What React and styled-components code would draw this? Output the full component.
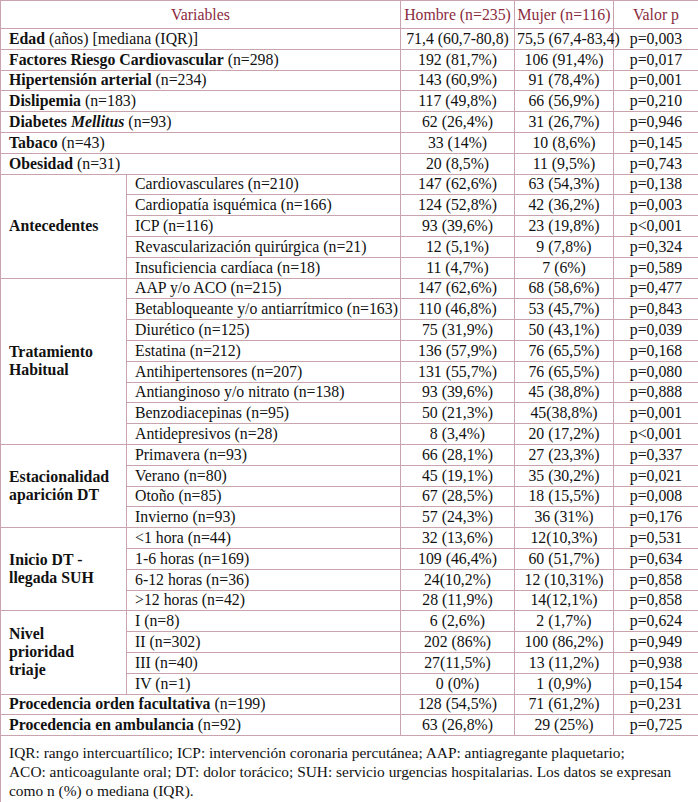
import React from 'react';
import styled, { createGlobalStyle } from 'styled-components';

const lineColor = '#c9a3ae';
const serif = '"Liberation Serif", "Times New Roman", serif';

const GlobalStyle = createGlobalStyle`
  body {
    margin: 0;
    background: #fff;
    font-family: ${ serif };
    color: #111;
  }
`;

const Table = styled.table`
  width: 698px;
  border-collapse: collapse;
  table-layout: fixed;
  font-family: ${ serif };
  font-size: 15.8px;
  line-height: 18px;
  color: #111;
`;

const HeadCell = styled.th`
  height: 27px;
  border: 1px solid ${ lineColor };
  color: #8a2b40;
  font-weight: 400;
  text-align: center;
  padding: 0 2px;
  white-space: nowrap;
`;

const Row = styled.tr`
  height: 20.8px;
`;

const Cell = styled.td`
  border: 1px solid ${ lineColor };
  padding: 0 8px;
  white-space: nowrap;
  text-align: ${ p => ( p.center ? 'center' : 'left' ) };
  ${ p => p.center && 'padding: 0 2px;' }
`;

const GroupCell = styled.td`
  border: 1px solid ${ lineColor };
  padding: 0 8px;
  font-weight: 700;
  line-height: 18px;
  vertical-align: middle;
`;

const NoteCell = styled.td`
  border: 1px solid ${ lineColor };
  padding: 7px 8px 8px;
  font-size: 15.4px;
  line-height: 19px;
  text-align: left;
  white-space: nowrap;
`;

const Strong = styled.b`
  font-weight: 700;
`;

const singles = [
  [ <><Strong>Edad</Strong> (años) [mediana (IQR)]</>, '71,4 (60,7-80,8)', '75,5 (67,4-83,4)', 'p=0,003' ],
  [ <><Strong>Factores Riesgo Cardiovascular</Strong> (n=298)</>, '192 (81,7%)', '106 (91,4%)', 'p=0,017' ],
  [ <><Strong>Hipertensión arterial</Strong> (n=234)</>, '143 (60,9%)', '91 (78,4%)', 'p=0,001' ],
  [ <><Strong>Dislipemia</Strong> (n=183)</>, '117 (49,8%)', '66 (56,9%)', 'p=0,210' ],
  [ <><Strong>Diabetes <i>Mellitus</i></Strong> (n=93)</>, '62 (26,4%)', '31 (26,7%)', 'p=0,946' ],
  [ <><Strong>Tabaco</Strong> (n=43)</>, '33 (14%)', '10 (8,6%)', 'p=0,145' ],
  [ <><Strong>Obesidad</Strong> (n=31)</>, '20 (8,5%)', '11 (9,5%)', 'p=0,743' ],
];

const groups = [
  {
    label: [ 'Antecedentes' ],
    rows: [
      [ 'Cardiovasculares (n=210)', '147 (62,6%)', '63 (54,3%)', 'p=0,138' ],
      [ 'Cardiopatía isquémica (n=166)', '124 (52,8%)', '42 (36,2%)', 'p=0,003' ],
      [ 'ICP (n=116)', '93 (39,6%)', '23 (19,8%)', 'p<0,001' ],
      [ 'Revascularización quirúrgica (n=21)', '12 (5,1%)', '9 (7,8%)', 'p=0,324' ],
      [ 'Insuficiencia cardíaca (n=18)', '11 (4,7%)', '7 (6%)', 'p=0,589' ],
    ],
  },
  {
    label: [ 'Tratamiento', 'Habitual' ],
    rows: [
      [ 'AAP y/o ACO (n=215)', '147 (62,6%)', '68 (58,6%)', 'p=0,477' ],
      [ 'Betabloqueante y/o antiarrítmico (n=163)', '110 (46,8%)', '53 (45,7%)', 'p=0,843' ],
      [ 'Diurético (n=125)', '75 (31,9%)', '50 (43,1%)', 'p=0,039' ],
      [ 'Estatina (n=212)', '136 (57,9%)', '76 (65,5%)', 'p=0,168' ],
      [ 'Antihipertensores (n=207)', '131 (55,7%)', '76 (65,5%)', 'p=0,080' ],
      [ 'Antianginoso y/o nitrato (n=138)', '93 (39,6%)', '45 (38,8%)', 'p=0,888' ],
      [ 'Benzodiacepinas (n=95)', '50 (21,3%)', '45(38,8%)', 'p=0,001' ],
      [ 'Antidepresivos (n=28)', '8 (3,4%)', '20 (17,2%)', 'p<0,001' ],
    ],
  },
  {
    label: [ 'Estacionalidad', 'aparición DT' ],
    rows: [
      [ 'Primavera (n=93)', '66 (28,1%)', '27 (23,3%)', 'p=0,337' ],
      [ 'Verano (n=80)', '45 (19,1%)', '35 (30,2%)', 'p=0,021' ],
      [ 'Otoño (n=85)', '67 (28,5%)', '18 (15,5%)', 'p=0,008' ],
      [ 'Invierno (n=93)', '57 (24,3%)', '36 (31%)', 'p=0,176' ],
    ],
  },
  {
    label: [ 'Inicio DT -', 'llegada SUH' ],
    rows: [
      [ '<1 hora (n=44)', '32 (13,6%)', '12(10,3%)', 'p=0,531' ],
      [ '1-6 horas (n=169)', '109 (46,4%)', '60 (51,7%)', 'p=0,634' ],
      [ '6-12 horas (n=36)', '24(10,2%)', '12 (10,31%)', 'p=0,858' ],
      [ '>12 horas (n=42)', '28 (11,9%)', '14(12,1%)', 'p=0,858' ],
    ],
  },
  {
    label: [ 'Nivel', 'prioridad', 'triaje' ],
    rows: [
      [ 'I (n=8)', '6 (2,6%)', '2 (1,7%)', 'p=0,624' ],
      [ 'II (n=302)', '202 (86%)', '100 (86,2%)', 'p=0,949' ],
      [ 'III (n=40)', '27(11,5%)', '13 (11,2%)', 'p=0,938' ],
      [ 'IV (n=1)', '0 (0%)', '1 (0,9%)', 'p=0,154' ],
    ],
  },
];

const tail = [
  [ <><Strong>Procedencia orden facultativa</Strong> (n=199)</>, '128 (54,5%)', '71 (61,2%)', 'p=0,231' ],
  [ <><Strong>Procedencia en ambulancia</Strong> (n=92)</>, '63 (26,8%)', '29 (25%)', 'p=0,725' ],
];

const Values = ( { values } ) => values.map(( v, i ) => <Cell center key={i}>{v}</Cell> );

const SingleRow = ( { row } ) => (
  <Row>
    <Cell colSpan={2}>{row[ 0 ]}</Cell>
    <Values values={row.slice( 1 )} />
  </Row>
);

export default function App() {
  return (
    <>
      <GlobalStyle />
      <Table>
        <colgroup>
          <col style={{ width: 126 }} />
          <col style={{ width: 274 }} />
          <col style={{ width: 114 }} />
          <col style={{ width: 99 }} />
          <col style={{ width: 85 }} />
        </colgroup>
        <thead>
          <tr>
            <HeadCell colSpan={2}>Variables</HeadCell>
            <HeadCell>Hombre (n=235)</HeadCell>
            <HeadCell>Mujer (n=116)</HeadCell>
            <HeadCell>Valor p</HeadCell>
          </tr>
        </thead>
        <tbody>
          {singles.map(( r, i ) => <SingleRow key={`s${ i }`} row={r} /> )}
          {groups.map( g => g.rows.map(( r, i ) => (
            <Row key={`${ g.label[ 0 ] }_${ i }`}>
              {i === 0 && (
                <GroupCell rowSpan={g.rows.length}>
                  {g.label.map(( l, j ) => <div key={j}>{l}</div> )}
                </GroupCell>
              )}
              <Cell>{r[ 0 ]}</Cell>
              <Values values={r.slice( 1 )} />
            </Row>
          )))}
          {tail.map(( r, i ) => <SingleRow key={`t${ i }`} row={r} /> )}
          <tr>
            <NoteCell colSpan={5}>
              IQR: rango intercuartílico; ICP: intervención coronaria percutánea; AAP: antiagregante plaquetario;<br />
              ACO: anticoagulante oral; DT: dolor torácico; SUH: servicio urgencias hospitalarias. Los datos se expresan<br />
              como n (%) o mediana (IQR).
            </NoteCell>
          </tr>
        </tbody>
      </Table>
    </>
  );
}
